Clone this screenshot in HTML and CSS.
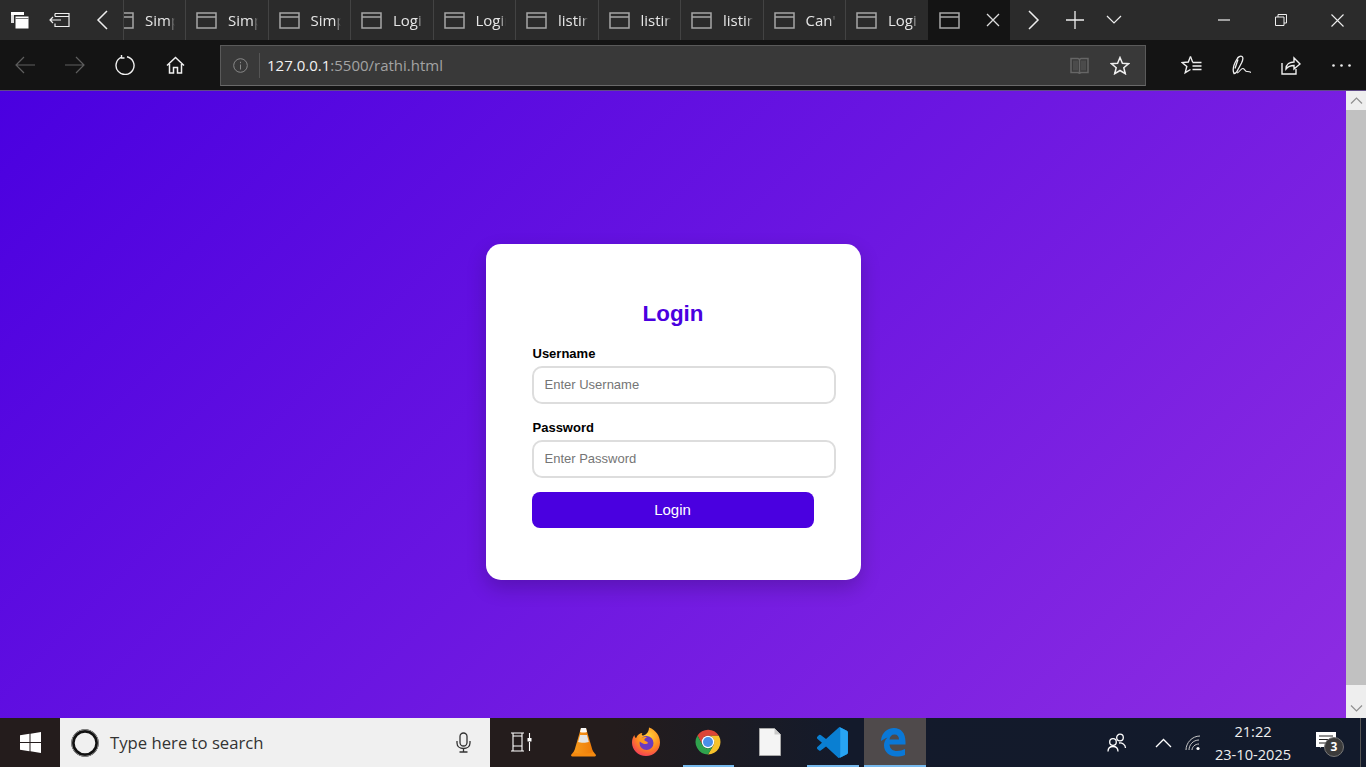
FILE: index.html
```html
<!DOCTYPE html>
<html lang="en">
<head>
<meta charset="utf-8">
<title>Login</title>
<link rel="stylesheet" href="styles.css">
</head>
<body>
<svg class="sprite" width="0" height="0" aria-hidden="true">
  <symbol id="tabglyph" viewBox="0 0 21 17"><path d="M1 1h19v15H1zM1 5h19" fill="none" stroke="currentColor" stroke-width="1.5"/></symbol>
</svg>
<div class="screen">
  <header class="titlebar">
    <div class="tb-btn w40"><svg width="20" height="20" viewBox="0 0 20 20"><path d="M1 2h13v3H1z" fill="#fff"/><path d="M1 5h3v8H1z" fill="#ddd"/><path d="M5 6h14v13H5z" fill="#fff" stroke="#2b2b2b"/><path d="M5 8.500h14" stroke="#777"/></svg></div>
    <div class="tb-btn w40"><svg width="22" height="16" viewBox="0 0 22 16"><path d="M6 1.500h14v13H6v-3M6 4.500v-3M6 4.500h14" fill="none" stroke="#eee" stroke-width="1.200"/><path d="M1 8h11M4 5L1 8l3 3" fill="none" stroke="#eee" stroke-width="1.200"/></svg></div>
    <div class="tb-btn w43"><svg width="12" height="20" viewBox="0 0 12 20"><path d="M11 1L2 10l9 9" fill="none" stroke="#eee" stroke-width="1.500"/></svg></div>
    <div class="tabs">
      <div class="tab tab-first"><svg class="tab-icon tab-icon-cut"><use href="#tabglyph"/></svg><span class="tab-text">Simple</span></div>
      <div class="tab"><svg class="tab-icon"><use href="#tabglyph"/></svg><span class="tab-text">Simple</span></div>
      <div class="tab"><svg class="tab-icon"><use href="#tabglyph"/></svg><span class="tab-text">Simple</span></div>
      <div class="tab"><svg class="tab-icon"><use href="#tabglyph"/></svg><span class="tab-text">Login</span></div>
      <div class="tab"><svg class="tab-icon"><use href="#tabglyph"/></svg><span class="tab-text">Login</span></div>
      <div class="tab"><svg class="tab-icon"><use href="#tabglyph"/></svg><span class="tab-text">listing</span></div>
      <div class="tab"><svg class="tab-icon"><use href="#tabglyph"/></svg><span class="tab-text">listing</span></div>
      <div class="tab"><svg class="tab-icon"><use href="#tabglyph"/></svg><span class="tab-text">listing</span></div>
      <div class="tab"><svg class="tab-icon"><use href="#tabglyph"/></svg><span class="tab-text">Can't</span></div>
      <div class="tab"><svg class="tab-icon"><use href="#tabglyph"/></svg><span class="tab-text">Login</span></div>
      <div class="tab tab-active"><svg class="tab-icon"><use href="#tabglyph"/></svg><svg class="tab-close" width="14" height="14" viewBox="0 0 14 14"><path d="M1 1l12 12M13 1L1 13" stroke="#ddd" stroke-width="1.300"/></svg></div>
    </div>
    <div class="tb-btn w47"><svg width="12" height="20" viewBox="0 0 12 20"><path d="M1 1l9 9-9 9" fill="none" stroke="#eee" stroke-width="1.500"/></svg></div>
    <div class="tb-btn w36"><svg width="18" height="18" viewBox="0 0 18 18"><path d="M0 9h18M9 0v18" stroke="#eee" stroke-width="1.300"/></svg></div>
    <div class="tb-btn w42"><svg width="16" height="10" viewBox="0 0 16 10"><path d="M1 1l7 7 7-7" fill="none" stroke="#eee" stroke-width="1.200"/></svg></div>
    <div class="spacer"></div>
    <div class="tb-btn w57"><svg width="12" height="2" viewBox="0 0 12 2"><path d="M0 1h12" stroke="#eee" stroke-width="1.200"/></svg></div>
    <div class="tb-btn w57"><svg width="12" height="12" viewBox="0 0 12 12"><path d="M.5 3h8.500v8.500H.5zM3 3V.5h8.500V9H9" fill="none" stroke="#eee"/></svg></div>
    <div class="tb-btn w57"><svg width="13" height="13" viewBox="0 0 13 13"><path d="M.5.5l12 12M12.500.5l-12 12" stroke="#eee" stroke-width="1.100"/></svg></div>
  </header>

  <nav class="toolbar">
    <div class="nav-btn w50"><svg width="20" height="18" viewBox="0 0 20 18"><path d="M20 9H1M9 1L1 9l8 8" fill="none" stroke="#5e5e5e" stroke-width="1.200"/></svg></div>
    <div class="nav-btn w50"><svg width="20" height="18" viewBox="0 0 20 18"><path d="M0 9h19M11 1l8 8-8 8" fill="none" stroke="#5e5e5e" stroke-width="1.200"/></svg></div>
    <div class="nav-btn w50"><svg width="20" height="20" viewBox="0 0 20 20"><path d="M6.500 2.200A9 9 0 1 0 12 1.700M6.500 0v3h3" fill="none" stroke="#f0f0f0" stroke-width="1.400"/></svg></div>
    <div class="nav-btn w50"><svg width="19" height="18" viewBox="0 0 19 18"><path d="M1 9.500L9.500 1.500 18 9.500M3.500 8v9h4v-5.500h4V17h4V8" fill="none" stroke="#f0f0f0" stroke-width="1.500"/></svg></div>
    <div class="address">
      <svg class="info" width="15" height="15" viewBox="0 0 15 15"><circle cx="7.500" cy="7.500" r="6.800" fill="none" stroke="#888"/><path d="M7.500 6.500v5M7.500 3.800v1.400" stroke="#888"/></svg>
      <span class="addr-sep"></span>
      <span class="url"><b class="host">127.0.0.1</b>:5500/rathi.html</span>
      <span class="spacer"></span>
      <svg class="book" width="19" height="17" viewBox="0 0 19 17"><path d="M1 1.500h7l1.500 1 1.500-1h7v14h-7l-1.500 .8L8 15.500H1zM9.500 2.500v13.500" fill="none" stroke="#666" stroke-width="1.500"/><path d="M3 3.500h5v10H3zM11 3.500h5v10h-5z" fill="#4b4b4b"/></svg>
      <svg class="star" width="20" height="19" viewBox="0 0 20 19"><path d="M10 1.500l2.400 5.700 6.100.5-4.700 4 1.500 6-5.300-3.200-5.300 3.200 1.500-6-4.700-4 6.100-.5z" fill="none" stroke="#f0f0f0" stroke-width="1.500"/></svg>
    </div>
    <div class="nav-right">
      <div class="nav-btn w50"><svg width="21" height="20" viewBox="0 0 21 20"><path d="M9.500 1.500L7.300 7 1 7.500l4.800 4-1.600 6.200 5.300-3.200" fill="none" stroke="#f0f0f0" stroke-width="1.400"/><path d="M9.500 1.500L11.600 7M11.500 7.500h9M11.500 11h9M11.500 14.500h9" fill="none" stroke="#f0f0f0" stroke-width="1.300"/></svg></div>
      <div class="nav-btn w50"><svg width="20" height="20" viewBox="0 0 20 20"><path d="M3 18.500C1 14.500 3 9 6 4c1-2 3.500-3.500 5-2.500 2 1.500.5 4.500-.5 6.500L7 14.500c-1 2.500-2.500 4-4 4zM7 4.500l-3 9" fill="none" stroke="#f0f0f0" stroke-width="1.300"/><path d="M6 18c3-1 4-5 6-4.500s2 3 4 3 3 0 4 1" fill="none" stroke="#f0f0f0" stroke-width="1.100"/></svg></div>
      <div class="nav-btn w50"><svg width="20" height="19" viewBox="0 0 20 19"><path d="M1 7v11h14v-5" fill="none" stroke="#f0f0f0" stroke-width="1.400"/><path d="M5 13c0-5 4-7 8-7V2l6 6-6 5V9.500c-3 0-6 1-8 3.500z" fill="none" stroke="#f0f0f0" stroke-width="1.400"/></svg></div>
      <div class="nav-btn w50"><svg width="19" height="3" viewBox="0 0 19 3"><circle cx="1.500" cy="1.500" r="1.300" fill="#eee"/><circle cx="9.500" cy="1.500" r="1.300" fill="#eee"/><circle cx="17.500" cy="1.500" r="1.300" fill="#eee"/></svg></div>
    </div>
  </nav>

  <div class="viewport">
    <main class="page">
      <form class="card">
        <h2 class="card-title">Login</h2>
        <div class="field">
          <label class="field-label" for="u">Username</label>
          <input class="field-input" id="u" type="text" placeholder="Enter Username">
        </div>
        <div class="field">
          <label class="field-label" for="p">Password</label>
          <input class="field-input" id="p" type="password" placeholder="Enter Password">
        </div>
        <button class="submit" type="button">Login</button>
      </form>
    </main>
    <aside class="scrollbar">
      <div class="sb-btn sb-up"><svg width="13" height="7" viewBox="0 0 13 7"><path d="M1 6.500l5.500-5.500 5.500 5.500" fill="none" stroke="#8f8f8f" stroke-width="1.200"/></svg></div>
      <div class="sb-track"></div>
      <div class="sb-btn sb-down"><svg width="13" height="7" viewBox="0 0 13 7"><path d="M1 .5l5.500 5.500 5.500-5.500" fill="none" stroke="#8f8f8f" stroke-width="1.200"/></svg></div>
    </aside>
  </div>

  <footer class="taskbar">
    <div class="start"><svg width="21" height="21" viewBox="0 0 21 21"><path d="M0 3.200l9.500-1.400v8.200H0zM10.500 1.700L21 0v10H10.500zM0 11h9.500v8.200L0 17.800zM10.500 11H21v10l-10.500-1.700z" fill="#fff"/></svg></div>
    <div class="search">
      <svg class="cortana" width="28" height="28" viewBox="0 0 28 28"><circle cx="14" cy="14" r="12" fill="none" stroke="#111" stroke-width="3.400"/><circle cx="14" cy="14" r="13.400" fill="none" stroke="#8a8a8a" stroke-width="1"/></svg>
      <span class="search-text">Type here to search</span>
      <span class="spacer"></span>
      <svg class="mic" width="15" height="21" viewBox="0 0 15 21"><rect x="4" y="1" width="7" height="13" rx="3.500" fill="none" stroke="#333" stroke-width="1.300"/><path d="M1 9v2c0 3.500 3 5.500 6.500 5.500S14 14.500 14 11V9M7.500 16.500V20M3.500 20h8" fill="none" stroke="#333" stroke-width="1.300"/></svg>
    </div>
    <div class="app"><svg width="22" height="20" viewBox="0 0 22 20"><path d="M1 1h13M3 1v3M12 1v3M3 4h9v10H3zM1 19h13M3 14v5M12 14v5" fill="none" stroke="#fff" stroke-width="1.100"/><path d="M19.500 1v5M19.500 10v9" stroke="#fff" stroke-width="1.100"/><rect x="17.500" y="6" width="4" height="3.500" fill="#fff"/></svg></div>
    <div class="app"><svg width="27" height="30" viewBox="0 0 27 30"><defs><linearGradient id="cone" x1="0" x2="1"><stop offset="0" stop-color="#f79a1c"/><stop offset="1" stop-color="#ee7b08"/></linearGradient></defs><path d="M1 28l4-5h17l4 5c0 1-1 1.500-2 1.500H3c-1 0-2-.5-2-1.500z" fill="#f58a10"/><path d="M11 1h5l7 24c-3 2-16 2-19 0z" fill="url(#cone)"/><path d="M10 8h7l1.800 7c-3 1-8 1-10.700 0z" fill="#e4e4e4"/><path d="M11 1h5l1 4c-2 .8-5 .8-7 0z" fill="#f9f9f9"/></svg></div>
    <div class="app"><svg width="30" height="30" viewBox="0 0 30 30"><defs><radialGradient id="fox" cx=".6" cy=".3" r=".85"><stop offset="0" stop-color="#ffd23a"/><stop offset=".5" stop-color="#ff8a1f"/><stop offset="1" stop-color="#f0226c"/></radialGradient></defs><path d="M15 29C7 29 1 23 1 15.500c0-3 1-6 2.500-7.500 0 1.500.5 2.500 1.500 3.200C6.500 7.500 9 6 11.500 6c-1 1-1 2 0 2.500C14 8.500 18 6 18 .5 25 3 29 9 29 15.500 29 23 23 29 15 29z" fill="url(#fox)"/><circle cx="15.500" cy="16" r="7" fill="#6a3bc0"/><path d="M8 13c2-2.500 5-3.500 8-2.500-2 .5-3 1.500-2.500 3 1 1 3 1 3.500 2.500-1 1-3 1.500-5 .5-2-.8-3.500-2-4-3.500z" fill="#ff9a1f"/></svg></div>
    <div class="app app-open"><svg width="30" height="30" viewBox="0 0 48 48"><path d="M7.200 13.500A20 20 0 0 1 41.300 14H24A10 10 0 0 0 15.340 29z" fill="#dc4537"/><path d="M41.300 14A20 20 0 0 1 24 44L32.660 29A10 10 0 0 0 24 14z" fill="#f7c22c"/><path d="M24 44A20 20 0 0 1 7.200 13.500L15.340 29A10 10 0 0 0 32.660 29z" fill="#2fa24d"/><circle cx="24" cy="24" r="10" fill="#fff"/><circle cx="24" cy="24" r="8" fill="#4a8fe8"/></svg></div>
    <div class="app"><svg width="22" height="28" viewBox="0 0 22 28"><path d="M.5 .5h15l6 6v21H.5z" fill="#f4f4f4" stroke="#a8a8a8"/><path d="M15.500 .5v6h6z" fill="#c9c9c9"/></svg></div>
    <div class="app app-open"><svg width="31" height="31" viewBox="0 0 100 100"><path d="M70.900 98.300a6 6 0 0 0 4.700-.2l20.600-9.900a6.200 6.200 0 0 0 3.500-5.600V17.400a6.200 6.200 0 0 0-3.500-5.600L75.600 1.900a6.200 6.200 0 0 0-7.100 1.200L29.100 39.100 11.900 26a4.200 4.200 0 0 0-5.300.2L1.100 31.300a4.200 4.200 0 0 0 0 6.200L16 51 1.100 64.500a4.200 4.200 0 0 0 0 6.200l5.500 5a4.200 4.200 0 0 0 5.300.2l17.200-13.100 39.400 36a6.200 6.200 0 0 0 2.400 1.500zM75 27.300 45.100 50 75 72.700V27.300z" fill="#0a7fd2"/><path d="M70.900 98.300a6 6 0 0 0 4.700-.2l20.600-9.900a6.200 6.200 0 0 0 3.500-5.600V17.400a6.200 6.200 0 0 0-3.500-5.600L75.600 1.900a6 6 0 0 0-4.700-.2c2.500 1 4.100 3 4.100 5.500v85.600c0 2.500-1.600 4.500-4.100 5.500z" fill="#28a4f2"/></svg></div>
    <div class="app app-open app-current"><svg class="edge-icon" width="26" height="30" viewBox="0 0 26 30"><path d="M1 13C2 5 8 1 14 1c7 0 11.500 5 11.500 14v2.500H9.500c.3 4.500 3.500 6.500 7.500 6.500 3 0 5.500-.8 8-2v6c-2.500 1.200-5.500 1.500-8.500 1.500-7 0-12.500-4.500-12.500-11 0-3 1-6 3.500-8-2.500 1-5 2.500-6.500 3.500zM9.500 12.500h9.500c0-3-1.500-5-4.500-5-3 0-4.700 2-5 5z" fill="#0a78d7"/></svg></div>
    <div class="spacer"></div>
    <div class="tray">
      <div class="tray-item w-people"><svg width="20" height="20" viewBox="0 0 20 20"><circle cx="13" cy="4.500" r="3.300" fill="none" stroke="#fff" stroke-width="1.300"/><circle cx="6" cy="9" r="3.300" fill="none" stroke="#fff" stroke-width="1.300"/><path d="M1 18.500c0-3 2-5 5-5s5 2 5 5M12 10c3-.5 6.500 1.500 6.500 5" fill="none" stroke="#fff" stroke-width="1.300"/></svg></div>
      <div class="tray-item w-chev"><svg width="17" height="10" viewBox="0 0 17 10"><path d="M1 9l7.500-7.500L16 9" fill="none" stroke="#fff" stroke-width="1.300"/></svg></div>
      <div class="tray-item w-wifi"><svg width="16" height="16" viewBox="0 0 16 16"><path d="M1 15C1 8 7 1 15 1M4 15c0-5 4-10 10-10M7 15c0-3 3-6 7-6" fill="none" stroke="#c9c9c9"/><circle cx="13" cy="13.500" r="1.600" fill="#fff"/></svg></div>
      <div class="clock"><span>21:22</span><span>23-10-2025</span></div>
      <div class="tray-item w-notif">
        <svg class="notif-icon" width="20" height="18" viewBox="0 0 20 18"><path d="M0 0h20v15H5l-1 1v-1H0z" fill="#fff"/><path d="M3 4h14M3 7.500h14M3 11h11" stroke="#222"/></svg>
        <span class="badge">3</span>
      </div>
      <div class="show-desktop"></div>
    </div>
  </footer>
</div>
</body>
</html>
```
FILE: styles.css
```css
* { box-sizing: border-box; }
html, body { margin: 0; padding: 0; height: 100%; overflow: hidden; }
body { font-family: "Liberation Sans", Arial, sans-serif; }
.sprite { position: absolute; }
.screen { width: 1366px; height: 767px; display: flex; flex-direction: column; }
.spacer { flex: 1; }

.titlebar { height: 40px; display: flex; background: #2b2b2b; flex: none; }
.tb-btn { display: flex; align-items: center; justify-content: center; flex: none; }
.w36 { width: 36px; } .w40 { width: 40px; } .w42 { width: 42px; } .w43 { width: 43px; }
.w47 { width: 47px; } .w50 { width: 50px; } .w57 { width: 57px; }
.tabs { display: flex; flex: none; }
.tab { width: 82.5px; height: 40px; display: flex; align-items: center; padding-left: 10px; gap: 11px; border-left: 1px solid #434343; color: #a6a6a6; overflow: hidden; flex: none; }
.tab-first { width: 62px; padding-left: 0; }
.tab-active { background: #141414; border-left-color: #141414; }
.tab-icon { width: 21px; height: 17px; flex: none; }
.tab-icon-cut { margin-left: -11px; }
.tab-close { margin-left: 15px; flex: none; }
.tab-text { width: 30px; overflow: hidden; white-space: nowrap; color: #e6e6e6; font: 15px/20px "Open Sans", sans-serif; -webkit-mask-image: linear-gradient(90deg, #000 80%, transparent); mask-image: linear-gradient(90deg, #000 80%, transparent); }

.toolbar { height: 51px; display: flex; align-items: center; background: #141414; border-bottom: 1px solid #5f4a86; flex: none; }
.nav-btn { height: 40px; display: flex; align-items: center; justify-content: center; flex: none; }
.address { width: 926px; height: 41px; margin-left: 20px; display: flex; align-items: center; background: #393939; border: 1px solid #5a5a5a; border-bottom-color: #6a6a6a; flex: none; padding-right: 15px; }
.info { margin-left: 12px; flex: none; }
.addr-sep { width: 1px; height: 25px; margin: 0 7px 0 11px; background: #555; flex: none; }
.url { color: #a3a3a3; font: 15px/20px "Open Sans", sans-serif; white-space: nowrap; }
.host { color: #f2f2f2; font-weight: 400; }
.book { margin-right: 21px; }
.nav-right { display: flex; margin-left: 20px; }

.viewport { flex: 1; display: flex; min-height: 0; }
.page { flex: 1; background: linear-gradient(135deg, #4a00e0, #8e2de2) 0 0 / 100% 642px no-repeat; display: flex; justify-content: center; align-items: flex-start; padding-top: 153px; }
.card { width: 375px; padding: 56px 46px 52px; background: #fff; border-radius: 15px; box-shadow: 0 8px 20px rgba(0, 0, 0, .2); }
.card-title { margin: 0 0 19px; padding-top: 1px; color: #4a00e0; font-size: 22.4px; line-height: 26px; font-weight: 700; text-align: center; }
.field { margin-bottom: 16px; }
.field-label { display: block; margin-bottom: 5px; padding-left: 1px; color: #000; font-size: 13px; line-height: 15px; font-weight: 700; }
.field-input { display: block; width: 304px; height: 38px; padding: 0 11px 1px; border: 2px solid #ddd; border-radius: 10px; background: #fff; font: 13px "Liberation Sans", Arial, sans-serif; outline: none; }
.field-input::placeholder { color: #757575; font-size: 13px; }
.submit { display: block; width: 282px; height: 36px; margin-top: -2px; border: 0; border-radius: 8px; background: #4a00e0; color: #fff; font: 15px "Liberation Sans", Arial, sans-serif; padding: 0 0 2px; }

.scrollbar { width: 20px; display: flex; flex-direction: column; background: #c1c1c1; flex: none; }
.sb-btn { display: flex; align-items: center; justify-content: center; background: #eee; flex: none; }
.sb-up { height: 19px; }
.sb-down { height: 33px; padding-top: 13px; }
.sb-track { flex: 1; }

.taskbar { height: 49px; display: flex; background: linear-gradient(90deg, #241c1c 0, #241c1c 45%, #131a2b 62%, #121a2b 100%); color: #fff; flex: none; }
.start { width: 60px; display: flex; align-items: center; justify-content: center; flex: none; }
.search { width: 430px; display: flex; align-items: center; background: #f0f0f0; padding: 0 19px 0 11px; flex: none; }
.cortana { flex: none; }
.search-text { margin-left: 11px; color: #333; font: 16.7px/24px "Open Sans", sans-serif; white-space: nowrap; }
.app { width: 62.3px; display: flex; align-items: center; justify-content: center; flex: none; border-bottom: 2px solid transparent; padding-top: 1px; }
.app-open { position: relative; }
.app-open::after { content: ""; position: absolute; left: 6px; right: 5px; bottom: -2px; height: 2px; background: #76b9ed; }
.app-current { background: #4f4a4b; }
.app-current::after { left: 0; right: 0; }
.edge-icon { margin-right: 4px; }
.tray { display: flex; align-items: center; height: 100%; }
.tray-item { display: flex; align-items: center; justify-content: center; flex: none; }
.w-people { width: 74px; }
.w-chev { width: 18px; }
.w-wifi { width: 42px; }
.clock { width: 78px; display: flex; flex-direction: column; align-items: center; font: 14.6px/23px "Open Sans", sans-serif; color: #eee; white-space: nowrap; flex: none; }
.w-notif { width: 68px; position: relative; }
.notif-icon { margin-bottom: 4px; }
.badge { position: absolute; left: 32px; top: 5px; width: 20px; height: 20px; border-radius: 50%; background: #3b3b3b; border: 1px solid #777; color: #fff; font: 700 12px/18px "Open Sans", sans-serif; text-align: center; }
.show-desktop { width: 6px; height: 100%; border-left: 1px solid #555; }
```
